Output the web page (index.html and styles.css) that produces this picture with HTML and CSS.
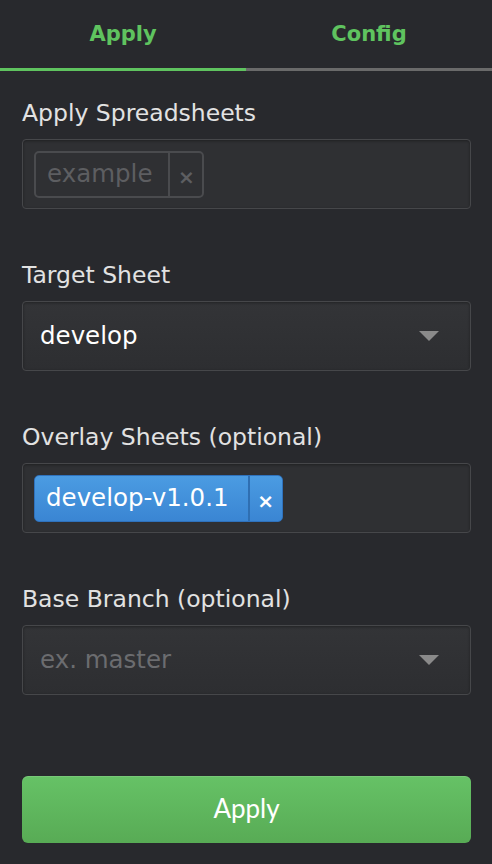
FILE: index.html
```html
<!DOCTYPE html>
<html>
<head>
<meta charset="utf-8">
<link rel="stylesheet" href="styles.css">
</head>
<body>
<div class="tabs">
  <div class="tab active">Apply</div>
  <div class="tab">Config</div>
</div>
<div class="form">
  <div class="group">
    <div class="label">Apply Spreadsheets</div>
    <div class="box tagbox">
      <div class="tag tag-ghost"><span class="tag-text">example</span><span class="tag-x">×</span></div>
    </div>
  </div>
  <div class="group">
    <div class="label">Target Sheet</div>
    <div class="box select">
      <span class="value">develop</span>
      <span class="caret"></span>
    </div>
  </div>
  <div class="group">
    <div class="label">Overlay Sheets (optional)</div>
    <div class="box tagbox">
      <div class="tag tag-blue"><span class="tag-text">develop-v1.0.1</span><span class="tag-x">×</span></div>
    </div>
  </div>
  <div class="group">
    <div class="label">Base Branch (optional)</div>
    <div class="box select">
      <span class="value placeholder">ex. master</span>
      <span class="caret"></span>
    </div>
  </div>
  <button class="apply-btn">Apply</button>
</div>
</body>
</html>
```

FILE: styles.css
```css
* { box-sizing: border-box; }
html, body {
  margin: 0;
  padding: 0;
  background: #28292d;
  font-family: "DejaVu Sans", "Noto Sans", sans-serif;
  color: #e2e2e2;
}
.tabs {
  display: flex;
  height: 71px;
}
.tab {
  flex: 1;
  display: flex;
  align-items: center;
  justify-content: center;
  color: #5fc35f;
  font-weight: bold;
  font-size: 21px;
  border-bottom: 3px solid #6a6a6a;
}
.tab.active {
  border-bottom-color: #5fc35f;
}
.form {
  padding: 28px 21px 0 22px;
  display: flex;
  flex-direction: column;
}
.group {
  margin-bottom: 52px;
}
.label {
  font-size: 23.5px;
  line-height: 28px;
  margin-bottom: 12px;
  color: #e2e2e2;
}
.box {
  height: 70px;
  border: 1px solid #46474a;
  border-radius: 4px;
  background: #2f3033;
  box-shadow: inset 0 1px 3px rgba(0,0,0,0.35);
  display: flex;
  align-items: center;
}
.tagbox {
  padding: 0 11px;
}
.tag {
  display: flex;
  height: 47px;
  border-radius: 5px;
  font-size: 24.5px;
  overflow: hidden;
}
.tag-text {
  display: flex;
  align-items: center;
  padding: 0 16px 2px 11px;
}
.tag-x {
  width: 34px;
  display: flex;
  align-items: center;
  justify-content: center;
  font-weight: bold;
  font-size: 20px;
  padding-top: 6px;
}
.tag-ghost {
  border: 2px solid #4a4b4e;
  color: #5d5e61;
}
.tag-ghost .tag-x {
  border-left: 2px solid #4a4b4e;
  color: #5d5e61;
}
.tag-blue {
  background: linear-gradient(#4b9ce2, #3a85d3);
  border: 1px solid #2f72bd;
  color: #ffffff;
}
.tag-blue .tag-text {
  padding-right: 19px;
}
.tag-blue .tag-x {
  border-left: 2px solid #2f6fb2;
  color: #ffffff;
}
.select {
  padding: 0 31px 0 17px;
  justify-content: space-between;
  background: linear-gradient(#333437, #2d2e31);
}
.value {
  font-size: 24.5px;
  color: #ffffff;
  padding-bottom: 2px;
}
.value.placeholder {
  color: #6b6c6f;
}
.caret {
  width: 0;
  height: 0;
  border-left: 10px solid transparent;
  border-right: 10px solid transparent;
  border-top: 10px solid #8a8a8a;
}
.apply-btn {
  margin-top: 29px;
  height: 67px;
  border: none;
  border-radius: 6px;
  background: linear-gradient(#66c266, #58ab55);
  box-shadow: inset 0 1px 0 rgba(255,255,255,0.12);
  color: #ffffff;
  font-family: "Lato", "DejaVu Sans", sans-serif;
  font-size: 26px;
  padding: 0 0 4px 0;
}
```
